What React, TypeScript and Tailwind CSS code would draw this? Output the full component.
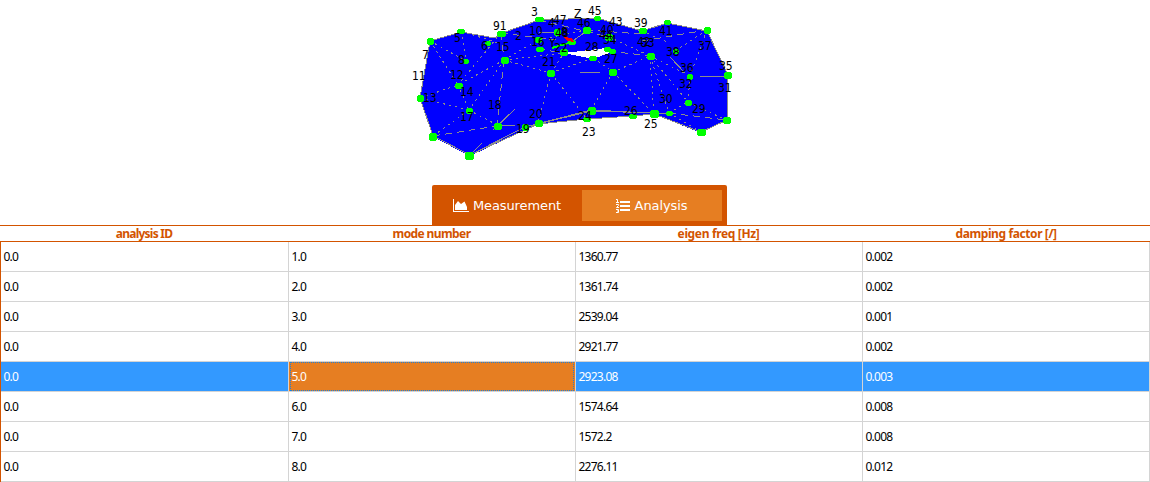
import React from "react";

const rows: string[][] = [
  ["0.0", "1.0", "1360.77", "0.002"],
  ["0.0", "2.0", "1361.74", "0.002"],
  ["0.0", "3.0", "2539.04", "0.001"],
  ["0.0", "4.0", "2921.77", "0.002"],
  ["0.0", "5.0", "2923.08", "0.003"],
  ["0.0", "6.0", "1574.64", "0.008"],
  ["0.0", "7.0", "1572.2", "0.008"],
  ["0.0", "8.0", "2276.11", "0.012"],
];

const headers: [string, string][] = [
  ["analysis ID", "-0.75px"],
  ["mode number", "-0.6px"],
  ["eigen freq [Hz]", "-0.35px"],
  ["damping factor [/]", "-0.4px"],
];

// x, y, width, height of each node marker
const nodes: number[][] = [
  [430, 41, 6, 6], [461, 31.5, 7, 4], [488, 43, 5, 4], [501.5, 33.5, 8, 5], [504.5, 60.5, 7, 6],
  [466, 61, 5, 4], [458.5, 85.5, 7, 5], [420, 98, 6, 6], [469, 110.5, 6, 5], [497.5, 126, 7, 6],
  [433, 136.5, 7, 7], [469.5, 155.5, 8, 7], [539, 19.5, 8, 4], [597, 18, 6, 4], [557, 32, 6, 6],
  [586.5, 30.5, 7, 6], [538, 40, 6, 5], [540, 49.5, 7, 4], [571.5, 42, 7, 4], [564, 52.5, 7, 6],
  [551, 73, 7, 6], [593, 58.5, 7, 4], [609, 37, 7, 6], [607, 49.5, 6, 4], [612, 51, 6, 4],
  [613, 72, 7, 6], [525, 127, 6, 6], [538.5, 123.5, 7, 6], [587, 119.5, 7, 4], [591.5, 110.5, 7, 7],
  [642.5, 31, 7, 5], [667, 22.5, 6, 4], [707, 30.5, 6, 6], [675.5, 51, 5, 4], [650.5, 56, 7, 6],
  [690, 76.5, 5, 5], [727.5, 75.5, 7, 6], [633, 116.5, 7, 4], [654, 114, 8, 7], [669, 113.5, 6, 4],
  [688.5, 102.5, 6, 5], [726.5, 120.5, 7, 6], [701, 132.5, 8, 6],
];

// left edge and baseline of each node label
const labels: [string, number, number][] = [
  ["3", 531, 16], ["47", 553, 24], ["4", 548, 27], ["Z", 574, 18], ["45", 588, 15], ["43", 609, 26],
  ["39", 634, 27], ["91", 493, 30], ["5", 454, 42], ["6", 481, 50], ["2", 515, 40], ["15", 496, 51],
  ["10", 529, 35], ["16", 531, 46], ["46", 577, 27], ["48", 555, 37], ["8", 561, 36], ["40", 600, 34],
  ["44", 599, 39], ["34", 603, 44], ["Y", 549, 47], ["22", 554, 52], ["28", 585, 51], ["27", 604, 63],
  ["21", 542, 66], ["7", 422, 59], ["8", 458, 64], ["11", 412, 80], ["12", 450, 79], ["13", 423, 102],
  ["14", 460, 96], ["18", 488, 109], ["17", 460, 121], ["20", 529, 118], ["19", 516, 133],
  ["24", 578, 120], ["23", 582, 136], ["26", 624, 115], ["25", 644, 128], ["30", 659, 103],
  ["41", 659, 35], ["42", 637, 46], ["33", 641, 47], ["38", 666, 56], ["37", 698, 50],
  ["36", 680, 72], ["35", 719, 70], ["32", 679, 88], ["31", 718, 92], ["29", 692, 113],
];

const sparseEdges = [
  "M430 41L466 61", "M430 41L458 85", "M461 31L501 44", "M461 31L466 61",
  "M501 33L458 85", "M504 60L458 85", "M504 60L469 110", "M458 85L469 110",
  "M420 98L458 85", "M420 98L469 110", "M469 110L433 136", "M469 110L497 125",
  "M504 60L538 40", "M504 60L551 73", "M504 60L564 53", "M551 73L538 123",
  "M551 73L587 119", "M551 73L564 53", "M613 72L591 110", "M613 72L654 114",
  "M613 72L650 56", "M593 58L613 72", "M609 37L650 56", "M650 56L654 114",
  "M650 56L669 113", "M650 56L688 102", "M650 56L690 76", "M707 30L675 51",
  "M707 30L690 76", "M669 113L688 102", "M688 102L726 120", "M669 113L701 132",
  "M690 76L688 102", "M538 40L586 30", "M642 31L667 42", "M551 73L593 58",
].join("");

const dashedEdges = [
  "M504 60L497 125", "M433 136L497 126", "M501 33L504 60", "M642 41L707 30",
  "M609 51L650 56", "M539 20L609 37", "M501 33L557 40", "M586 30L642 34",
  "M669 113L726 120", "M538 49L564 53",
].join("");

const solidEdges = [
  "M430 41L461 32L495 38L502 33L539 20L597 18L642 31L667 23L707 31L728 75L727 120L701 132L654 114",
  "M420 98L433 136L470 155L538 124L587 119L633 116L654 114",
  "M430 41L420 98", "M470 155L525 127L591 110L669 114", "M538 124L591 111L654 113",
  "M470 155L482 143", "M493 130L515 109", "M497 126L515 125", "M580 72.5H600",
  "M700 76.5H728", "M670 57L685 73", "M539 32H557", "M587 31L571 42",
].join("");

function Mesh() {
  return (
    <svg
      width="330"
      height="165"
      viewBox="410 0 330 165"
      className="block shrink-0"
      shapeRendering="crispEdges"
    >
      <path
        fill="#0000ff"
        fillRule="evenodd"
        d="M430 41L461 32L495 38L501 33L539 20L597 18L642 31L667 23L707 31L728 76L727 120L701 133L654 114L633 116L587 119L538 124L470 156L433 137L420 98ZM564 53L606 48L612 52L593 59Z"
      />
      <g fill="none" stroke="#8c8c8c" strokeWidth="1">
        <path d={sparseEdges} strokeDasharray="2 4" />
        <path d={dashedEdges} strokeDasharray="7 5" />
        <path d={solidEdges} />
      </g>
      <path d="M552 48L572 42" stroke="#00ff00" strokeWidth="2" />
      <g fill="#00ff00" stroke="#00ff00" strokeWidth="1">
        {nodes.map(([x, y, w, h], i) => (
          <path
            key={i}
            d={`M${x - w / 2} ${y - h / 2 + 1}h1v-1h${w - 2}v1h1v${h - 2}h-1v1h-${w - 2}v-1h-1z`}
          />
        ))}
      </g>
      <path d="M563 37L572 38L574 42L568 41Z" fill="#ff0000" />
      <g
        className="font-['DejaVu_Sans_Condensed','DejaVu_Sans',sans-serif] text-[12px] tracking-[-0.1px]"
        fill="#000"
      >
        {labels.map(([t, x, y], i) => (
          <text key={i} x={x} y={y}>{t}</text>
        ))}
      </g>
    </svg>
  );
}

function AreaIcon() {
  return (
    <svg width="16" height="14" viewBox="0 0 16 14" fill="white" className="shrink-0">
      <path d="M0 0H1V12H16V13H0ZM2 11V6L5 2L8 5L11.5 2.5L14 8V11Z" />
    </svg>
  );
}

function ListIcon() {
  return (
    <svg width="14" height="14" viewBox="0 0 14 14" className="shrink-0">
      <path d="M4 3H14M4 7H14M4 11H14" stroke="white" strokeWidth="2" />
      <path
        d="M0 .5H1.5V3.5M0 3.5H3M0 5.5H2.5V6.5L.5 8.5H3M0 10.5H2.5V13.5H0M1 12H2.5"
        fill="none"
        stroke="white"
        strokeWidth="1"
      />
    </svg>
  );
}

export default function App() {
  return (
    <div className="flex h-[482px] w-[1150px] flex-col overflow-hidden bg-white font-['Noto_Sans',sans-serif]">
      <div className="h-[185px] shrink-0 pl-[410px]">
        <Mesh />
      </div>
      <div className="ml-[432px] flex h-10 w-[295px] shrink-0 rounded-t-[2px] bg-[#d35400] pt-[5px] font-['DejaVu_Sans',sans-serif] text-[13px] text-white">
        <button className="flex h-[31px] w-[150px] items-center justify-center gap-1">
          <AreaIcon />
          <span className="tracking-[-0.1px]">Measurement</span>
        </button>
        <button className="flex h-[31px] w-[140px] items-center justify-center gap-[5px] bg-[#e67e22] pr-px">
          <ListIcon />
          <span className="tracking-[-0.1px]">Analysis</span>
        </button>
      </div>
      <div className="grid h-[17px] shrink-0 grid-cols-[288px_287px_287px_288px] border-y border-[#d35400] text-center text-xs leading-[15px] font-bold text-[#d35400]">
        {headers.map(([h, spacing]) => (
          <div key={h} className="whitespace-nowrap" style={{ letterSpacing: spacing }}>{h}</div>
        ))}
      </div>
      <div className="border-l border-[#d35400]">
        {rows.map((row, r) => (
          <div
            key={r}
            className={`grid h-[30px] grid-cols-[288px_287px_287px_287px] text-xs leading-[29px] tracking-[-0.75px] ${
              r === 4 ? "bg-[#3399ff] text-white" : "text-black"
            }`}
          >
            {row.map((value, c) => (
              <div
                key={c}
                className={`relative border-r border-b border-[#d4d4d4] pl-[2.5px] ${
                  r === 4 && c === 1 ? "bg-[#e67e22]" : ""
                }`}
              >
                {value}
                {r === 4 && c === 1 && (
                  <span className="absolute inset-x-px inset-y-0 border border-dotted border-[#1981dd]" />
                )}
              </div>
            ))}
          </div>
        ))}
      </div>
    </div>
  );
}
